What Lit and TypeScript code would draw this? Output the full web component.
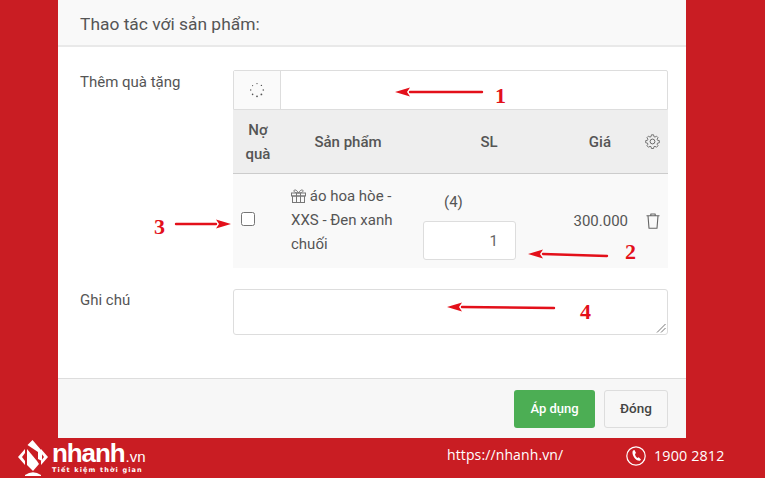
import { LitElement, html, css, svg } from "lit";
import { customElement } from "lit/decorators.js";

const arrow = (x1: number, y1: number, x2: number, y2: number) => {
  const dir = x2 > x1 ? 1 : -1;
  const bx = x2 - dir * 15;
  return svg`<line x1=${x1} y1=${y1} x2=${bx} y2=${y2} stroke="#e3101a" stroke-width="2.4" stroke-linecap="round"/>
    <polygon points="${x2},${y2} ${bx},${y2 - 4.5} ${bx + dir * 3},${y2} ${bx},${y2 + 4.5}" fill="#e3101a"/>`;
};

@customElement("app-root")
export class AppRoot extends LitElement {
  static styles = css`
    :host {
      display: block;
      position: relative;
      width: 765px;
      height: 478px;
      overflow: hidden;
      background: #c91d23;
      font-family: Roboto, "Liberation Sans", sans-serif;
      color: #555;
      font-size: 15px;
    }
    .modal {
      margin-left: 58px;
      width: 628px;
      height: 438px;
      background: #fff;
      display: flex;
      flex-direction: column;
    }
    .head {
      height: 47px;
      box-sizing: border-box;
      background: #f9f9f9;
      border-bottom: 2px solid #e9e9e9;
      padding: 14px 0 0 22px;
      font-size: 17.4px;
      line-height: 20px;
      flex: none;
    }
    .body {
      flex: 1;
      padding: 23px 18px 0 22px;
    }
    .row {
      display: grid;
      grid-template-columns: 153px 435px;
    }
    .label {
      line-height: 20px;
      padding-top: 2px;
    }
    .note-row .label {
      padding-top: 1px;
    }
    .search {
      display: flex;
      height: 40px;
      box-sizing: border-box;
      border: 1px solid #ddd;
      background: #fff;
      border-radius: 2px 2px 0 0;
    }
    .addon {
      width: 47px;
      background: #fafafa;
      border-right: 1px solid #ddd;
      display: flex;
      align-items: center;
      justify-content: center;
      flex: none;
      padding-right: 1px;
      box-sizing: border-box;
    }
    .thead,
    .tbody {
      display: grid;
      grid-template-columns: 50px 130px 112px 103px 40px;
    }
    .thead {
      height: 64px;
      box-sizing: border-box;
      background: #eee;
      border-bottom: 1px solid #ccc;
      align-items: center;
      font-weight: 500;
      line-height: 24px;
    }
    .tc {
      text-align: center;
    }
    .th-sl {
      text-align: center;
      padding-left: 40px;
    }
    .th-gia {
      text-align: right;
      padding-right: 17px;
    }
    .gear {
      display: flex;
      justify-content: center;
      padding-left: 8px;
    }
    .tbody {
      height: 94px;
      background: #f9f9f9;
    }
    .check {
      padding: 38px 0 0 8px;
    }
    .box {
      width: 14px;
      height: 14px;
      box-sizing: border-box;
      border: 1px solid #767676;
      border-radius: 2.5px;
      background: #fff;
    }
    .name {
      padding: 10px 0 0 8px;
      line-height: 24px;
    }
    .name svg {
      vertical-align: -2px;
    }
    .qty {
      padding: 18px 0 0 10px;
    }
    .qty-count {
      padding-left: 21px;
      line-height: 20px;
    }
    .qty-input {
      margin-top: 9px;
      width: 93px;
      height: 39px;
      box-sizing: border-box;
      border: 1px solid #ddd;
      border-radius: 3px;
      background: #fff;
      text-align: right;
      padding: 9px 17px 0 0;
      line-height: 20px;
      color: #666;
    }
    .price {
      text-align: right;
      padding-top: 37px;
      line-height: 20px;
    }
    .trash {
      display: flex;
      justify-content: center;
      padding: 39px 0 0 10px;
      align-items: flex-start;
    }
    .note-row {
      margin-top: 21px;
    }
    .note {
      position: relative;
      height: 46px;
      box-sizing: border-box;
      border: 1px solid #ddd;
      border-radius: 3px;
      background: #fff;
    }
    .grip {
      position: absolute;
      right: 1px;
      bottom: 1px;
    }
    .foot {
      flex: none;
      height: 60px;
      box-sizing: border-box;
      border-top: 1px solid #ddd;
      background: #f7f7f7;
      display: flex;
      justify-content: flex-end;
      gap: 9px;
      padding: 11px 18px 0 0;
    }
    .btn {
      height: 38px;
      box-sizing: border-box;
      border-radius: 3px;
      display: flex;
      align-items: center;
      justify-content: center;
      font-weight: 500;
      padding-bottom: 2px;
    }
    .apply {
      width: 81px;
      background: #4cae54;
      color: #fff;
      font-size: 13px;
    }
    .close {
      width: 64px;
      background: #f7f7f7;
      border: 1px solid #ddd;
      color: #444;
      font-size: 13.5px;
    }
    .bar {
      height: 40px;
      display: flex;
      align-items: flex-start;
      color: #fff;
    }
    .logo {
      margin: 2px 0 0 17px;
      display: flex;
      width: 430px;
      flex: none;
    }
    .brand {
      margin-left: 3px;
      display: flex;
      flex-direction: column;
    }
    .brand-name {
      font-family: "Liberation Sans", sans-serif;
      font-weight: 700;
      font-size: 26px;
      line-height: 26px;
      height: 26px;
      letter-spacing: -1.1px;
    }
    .brand-name span {
      font-weight: 400;
      font-size: 15px;
      letter-spacing: 0;
      margin-left: 1px;
    }
    .brand-tag {
      font-family: "DejaVu Sans", sans-serif;
      font-size: 6.5px;
      line-height: 8px;
      font-weight: 700;
      letter-spacing: 1.15px;
      white-space: nowrap;
    }
    .url {
      font-family: "Open Sans", sans-serif;
      font-size: 14px;
      line-height: 20px;
      margin-top: 7px;
      width: 179px;
      flex: none;
      letter-spacing: 0.12px;
    }
    .phone {
      display: flex;
      align-items: center;
      gap: 8px;
      margin-top: 6px;
      font-family: "Open Sans", sans-serif;
      font-size: 14.3px;
      line-height: 24px;
      letter-spacing: 0.15px;
    }
    .overlay {
      position: absolute;
      left: 0;
      top: 0;
      pointer-events: none;
    }
    .num {
      font-family: "Liberation Serif", serif;
      font-weight: 700;
      font-size: 22px;
      fill: #e3101a;
    }
  `;

  render() {
    return html`
      <div class="modal">
        <div class="head">Thao tác với sản phẩm:</div>
        <div class="body">
          <div class="row">
            <div class="label">Thêm quà tặng</div>
            <div>
              <div class="search">
                <div class="addon">
                  <svg width="16" height="16" viewBox="0 0 16 16" fill="#555">
                    <circle cx="8" cy="1.6" r=".7" /><circle cx="12.4" cy="3.4" r=".7" />
                    <circle cx="14.3" cy="8" r=".8" /><circle cx="12.4" cy="12.4" r=".9" />
                    <circle cx="8" cy="14.3" r=".9" /><circle cx="3.6" cy="12.4" r=".8" />
                    <circle cx="1.7" cy="8" r=".7" /><circle cx="3.6" cy="3.6" r=".6" />
                  </svg>
                </div>
              </div>
              <div class="thead">
                <div class="tc">Nợ<br />quà</div>
                <div class="tc">Sản phẩm</div>
                <div class="th-sl">SL</div>
                <div class="th-gia">Giá</div>
                <div class="gear">
                  <svg width="17" height="17" viewBox="0 0 24 24" fill="none" stroke="#666" stroke-width="1.4" stroke-linejoin="round">
                    <path d="M10.3 2.5h3.4l.5 2.800 1.700.8 2.400-1.500 2.400 2.400-1.500 2.400.7 1.700 2.800.5v3.400l-2.800.5-.7 1.700 1.500 2.400-2.400 2.400-2.400-1.500-1.700.7-.5 2.800h-3.400l-.5-2.800-1.700-.7-2.400 1.500-2.400-2.400 1.500-2.400-.7-1.700-2.800-.5v-3.400l2.800-.5.7-1.700-1.500-2.400 2.400-2.400 2.400 1.500 1.700-.8z" transform="translate(12 12) scale(.9) translate(-12 -13)" />
                    <circle cx="12" cy="12" r="3.4" />
                  </svg>
                </div>
              </div>
              <div class="tbody">
                <div class="check"><div class="box"></div></div>
                <div class="name">
                  <svg width="15" height="14" viewBox="0 0 15 14" fill="none" stroke="#777" stroke-width="1">
                    <rect x=".5" y="4" width="14" height="3" />
                    <rect x="1.5" y="7" width="12" height="6.5" />
                    <path d="M5.500 4v9.500M9.500 4v9.500M7.500 4C6 1 3.500.2 3 1.500S4.500 4 7.500 4c3 0 5-1.200 4.500-2.500S9 1 7.500 4z" />
                  </svg>
                  áo hoa hòe - XXS - Đen xanh chuối
                </div>
                <div class="qty">
                  <div class="qty-count">(4)</div>
                  <div class="qty-input">1</div>
                </div>
                <div class="price">300.000</div>
                <div class="trash">
                  <svg width="14" height="16" viewBox="0 0 14 16" fill="none" stroke="#666" stroke-width="1.100" stroke-linejoin="round">
                    <path d="M.5 2.800h13M4.800 2.800V1h4.400v1.800M2 2.800l1 12.400h8l1-12.400" />
                  </svg>
                </div>
              </div>
            </div>
          </div>
          <div class="row note-row">
            <div class="label">Ghi chú</div>
            <div class="note">
              <svg class="grip" width="10" height="10" viewBox="0 0 10 10" stroke="#777" stroke-width="1">
                <path d="M1 9.500L9.500 1M5 9.500L9.500 5" />
              </svg>
            </div>
          </div>
        </div>
        <div class="foot">
          <div class="btn apply">Áp dụng</div>
          <div class="btn close">Đóng</div>
        </div>
      </div>
      <div class="bar">
        <div class="logo">
          <svg width="32" height="36" viewBox="0 0 32 36" fill="#fff">
            <path d="M8 9 L1 17 L8 25 L8 21 L5 17 L8 13z" />
            <path d="M24 9 L31 17 L24 25 L24 21 L27 17 L24 13z" />
            <path d="M10.500 5 L15.500 0 L25 11 V21 L21 19 V12z" />
            <path d="M10 9 L20 21 L22 24 L16 31 L10 25z" />
            <path d="M8 35 Q16 29.500 24 35 L24 36 H8z" />
          </svg>
          <div class="brand">
            <div class="brand-name">nhanh<span>.vn</span></div>
            <div class="brand-tag">Tiết kiệm thời gian</div>
          </div>
        </div>
        <div class="url">https://nhanh.vn/</div>
        <div class="phone">
          <svg width="20" height="20" viewBox="0 0 20 20" fill="none" stroke="#fff">
            <circle cx="10" cy="10" r="9.200" stroke-width="1.200" />
            <path d="M7 4.500l1.500-.5 1.500 3-1 1c0 1.500 1 3 2.500 4l1.200-.8 2.300 2.300-1 1.200c-4 .5-8-5-7.500-9z" fill="#fff" stroke="none" />
          </svg>
          <span>1900 2812</span>
        </div>
      </div>
      <svg class="overlay" width="765" height="478">
        ${arrow(482, 92, 395, 92)}
        ${arrow(607, 256, 528, 254)}
        ${arrow(176, 224, 231, 224)}
        ${arrow(554, 308, 447, 307)}
        <text class="num" x="495" y="103">1</text>
        <text class="num" x="625" y="259">2</text>
        <text class="num" x="154" y="234">3</text>
        <text class="num" x="580" y="319">4</text>
      </svg>
    `;
  }
}
